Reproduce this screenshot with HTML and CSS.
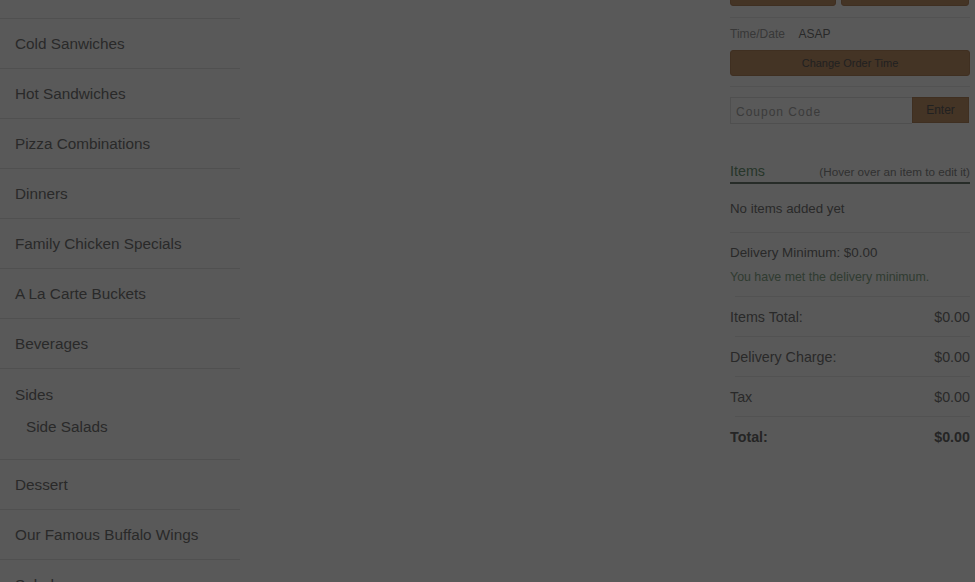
FILE: index.html
```html
<!DOCTYPE html>
<html lang="en">
<head>
    <meta charset="UTF-8">
    <meta name="viewport" content="width=device-width, initial-scale=1.0">
    <title>Order Online</title>
    <link rel="stylesheet" href="styles.css">
</head>
<body>
    <div class="page">
        <ul class="menu">
            <li class="menu-item">Hot Dogs</li>
            <li class="menu-item">Cold Sanwiches</li>
            <li class="menu-item">Hot Sandwiches</li>
            <li class="menu-item">Pizza Combinations</li>
            <li class="menu-item">Dinners</li>
            <li class="menu-item">Family Chicken Specials</li>
            <li class="menu-item">A La Carte Buckets</li>
            <li class="menu-item">Beverages</li>
            <li class="menu-item has-sub">
                <span>Sides</span>
                <span class="sub-item">Side Salads</span>
            </li>
            <li class="menu-item">Dessert</li>
            <li class="menu-item">Our Famous Buffalo Wings</li>
            <li class="menu-item">Salads</li>
        </ul>

        <div class="content"></div>

        <div class="cart">
            <div class="order-type">
                <button class="btn type-btn delivery">Delivery</button>
                <button class="btn type-btn pickup">Pickup</button>
            </div>

            <div class="time-row">
                <span class="label">Time/Date</span>
                <span class="value">ASAP</span>
            </div>
            <button class="btn change-time">Change Order Time</button>

            <div class="coupon">
                <input type="text" placeholder="Coupon Code">
                <button class="btn enter">Enter</button>
            </div>

            <div class="items-head">
                <span class="items-title">Items</span>
                <span class="items-hint">(Hover over an item to edit it)</span>
            </div>
            <div class="no-items">No items added yet</div>

            <div class="minimum">
                <div>Delivery Minimum: $0.00</div>
                <div class="met">You have met the delivery minimum.</div>
            </div>

            <div class="total-row">
                <span>Items Total:</span>
                <span>$0.00</span>
            </div>
            <div class="total-row">
                <span>Delivery Charge:</span>
                <span>$0.00</span>
            </div>
            <div class="total-row">
                <span>Tax</span>
                <span>$0.00</span>
            </div>
            <div class="total-row grand">
                <span>Total:</span>
                <span>$0.00</span>
            </div>
        </div>
    </div>

    <div class="overlay"></div>
</body>
</html>
```

FILE: styles.css
```css
* {
    margin: 0;
    padding: 0;
    box-sizing: border-box;
}

body {
    font-family: "Liberation Sans", Arial, sans-serif;
    background: #fff;
    color: #7a7a7a;
    overflow: hidden;
}

.page {
    display: flex;
    margin-top: -31px;
}

/* left category list */
.menu {
    list-style: none;
    width: 240px;
    flex-shrink: 0;
}

.menu-item {
    height: 50px;
    padding: 0 15px;
    display: flex;
    align-items: center;
    font-size: 15.3px;
    border-bottom: 1px solid #e4e4e4;
    color: #777;
}

.menu-item:first-child {
    padding-bottom: 6px;
}

.menu-item.has-sub {
    height: 91px;
    flex-direction: column;
    align-items: flex-start;
    justify-content: flex-start;
    padding-top: 17px;
}

.sub-item {
    margin: 14px 0 0 11px;
}

.content {
    flex: 1;
}

/* right order panel */
.cart {
    width: 240px;
    margin-right: 5px;
    flex-shrink: 0;
    padding-top: 11px;
    font-size: 13px;
}

.btn {
    font-family: inherit;
    border: 1px solid #b5865e;
    background: #c4946a;
    color: #666;
    border-radius: 3px;
    cursor: pointer;
}

.order-type {
    display: flex;
    gap: 5px;
    height: 26px;
}

.type-btn {
    font-size: 12px;
    color: #c4946a;
}

.type-btn.delivery {
    width: 106px;
}

.type-btn.pickup {
    width: 128px;
}

.time-row {
    margin-top: 11px;
    border-top: 1px solid #ececec;
    padding-top: 9px;
    height: 29px;
    font-size: 12px;
}

.time-row .label {
    color: #a0a0a0;
    margin-right: 11px;
}

.time-row .value {
    color: #777;
}

.change-time {
    display: block;
    width: 100%;
    height: 26px;
    font-size: 11px;
    margin-top: 4px;
    color: #5e5e5e;
}

.coupon {
    display: flex;
    margin-top: 10px;
    border-top: 1px solid #ececec;
    padding-top: 10px;
}

.coupon input {
    width: 182px;
    height: 27px;
    border: 1px solid #e2e2e2;
    border-right: none;
    padding: 2px 5px 0;
    font-family: inherit;
    font-size: 12px;
    letter-spacing: 1px;
    color: #777;
    background: #fff;
}

.coupon input::placeholder {
    color: #aaa;
}

.enter {
    width: 57px;
    height: 26px;
    border-radius: 0;
    font-size: 12px;
    color: #5e5e5e;
}

.items-head {
    margin-top: 39px;
    display: flex;
    justify-content: space-between;
    align-items: baseline;
    border-bottom: 2px solid #6f7f73;
    padding-bottom: 3px;
}

.items-title {
    font-size: 14.3px;
    color: #6f9a78;
}

.items-hint {
    font-size: 11.7px;
    color: #8c8c8c;
}

.no-items {
    height: 49px;
    padding-top: 17px;
    border-bottom: 1px solid #ececec;
    font-size: 13.3px;
    color: #777;
}

.minimum {
    padding-top: 12px;
    height: 63px;
    font-size: 13.4px;
    color: #777;
}

.minimum .met {
    margin-top: 10px;
    font-size: 12.4px;
    color: #8aab8c;
}

.total-row {
    margin-left: 5px;
    height: 40px;
    border-top: 1px solid #ececec;
    display: flex;
    align-items: center;
    justify-content: space-between;
    font-size: 14.3px;
    color: #777;
}

.total-row span:first-child {
    margin-left: -5px;
}

.total-row.grand {
    font-weight: bold;
    color: #6a6a6a;
}

/* modal backdrop over the page */
.overlay {
    position: fixed;
    inset: 0;
    background: rgba(0, 0, 0, 0.65);
}
```
